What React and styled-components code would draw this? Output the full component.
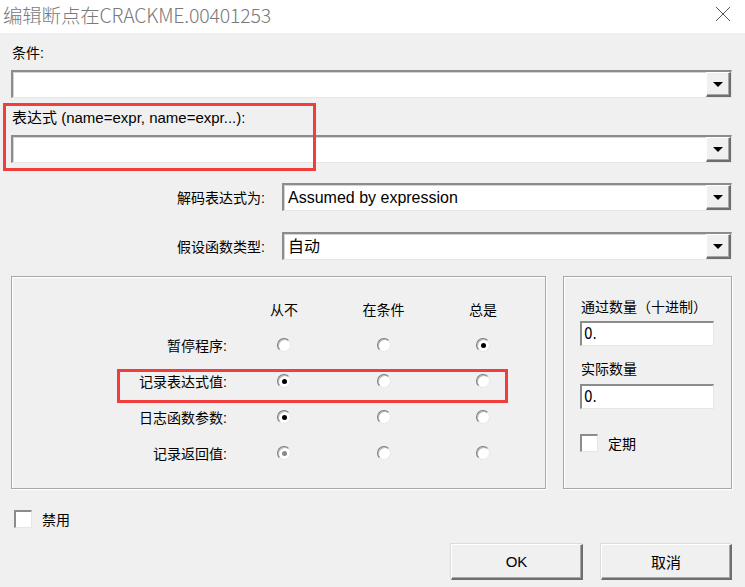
import React from "react";
import styled, { createGlobalStyle } from "styled-components";

const Global = createGlobalStyle`
  html, body { margin: 0; padding: 0; background: #f0f0f0; }
  * { box-sizing: border-box; }
`;

const FONT = `"Liberation Sans", "Noto Sans CJK SC", sans-serif`;

const Window = styled.div`
  width: 745px;
  height: 587px;
  background: #f0f0f0;
  display: flex;
  flex-direction: column;
  font-family: ${FONT};
  font-size: 14px;
  color: #000;
  overflow: hidden;
`;

const TitleBar = styled.div`
  height: 33px;
  background: #fff;
  display: flex;
  align-items: center;
  justify-content: space-between;
  padding: 0 14px 0 3px;
  flex-shrink: 0;
`;

const Title = styled.div`
  font-family: "Noto Sans CJK SC", "Liberation Sans", sans-serif;
  font-size: 19.5px;
  font-weight: 300;
  color: #7a7a7a;
  margin-top: -4px;
  letter-spacing: -0.2px;
  white-space: nowrap;
`;

const Close = styled.svg`
  width: 16px;
  height: 16px;
  margin-top: -6px;
`;

const Body = styled.div`
  position: relative;
  flex: 1;
  display: flex;
  flex-direction: column;
  padding: 0 13px 0 11px;
`;

const Label = styled.div`
  line-height: 18px;
  height: 18px;
  margin-top: ${(p) => p.$mt || 0}px;
  padding-left: 1px;
  white-space: nowrap;
  font-size: ${(p) => p.$fs || 14}px;
`;

const Combo = styled.div`
  height: 28px;
  margin-top: ${(p) => p.$mt || 0}px;
  flex: ${(p) => (p.$grow ? "1 1 auto" : "none")};
  display: flex;
  background: #fff;
  border-top: 2px solid #8c8c8c;
  border-left: 2px solid #8c8c8c;
  border-right: 1px solid #e6e6e6;
  border-bottom: 1px solid #e6e6e6;
  box-shadow: inset 1px 1px 0 #d4d4d4;
`;

const ComboText = styled.div`
  flex: 1;
  padding-left: 4px;
  line-height: 25px;
  font-size: 16px;
  white-space: nowrap;
`;

const DropBtn = styled.div`
  width: 25px;
  background: #f0f0f0;
  border-top: 1px solid #ffffff;
  border-left: 1px solid #ffffff;
  border-right: 2px solid #6e6e6e;
  border-bottom: 2px solid #6e6e6e;
  box-shadow: inset -1px -1px 0 #a8a8a8;
  display: flex;
  align-items: center;
  justify-content: center;
`;

const Arrow = styled.div`
  width: 0;
  height: 0;
  border-left: 5px solid transparent;
  border-right: 5px solid transparent;
  border-top: 5px solid #000;
  margin-top: 1px;
`;

const FieldRow = styled.div`
  display: flex;
  align-items: center;
  margin-top: ${(p) => p.$mt || 0}px;
`;

const RowLabel = styled.div`
  width: 255px;
  text-align: right;
  padding-right: 1px;
  margin-right: 16px;
  white-space: nowrap;
`;

const Groups = styled.div`
  display: flex;
  gap: 17px;
  margin-top: 16px;
  height: 213px;
  flex: none;
`;

const GroupBox = styled.div`
  border: 1px solid #a8a8a8;
  box-shadow: inset 1px 1px 0 #fff, 1px 1px 0 #fff;
  width: ${(p) => p.$w}px;
`;

const ModeGrid = styled.div`
  display: grid;
  grid-template-columns: 222px 100px 99px 100px;
  grid-auto-rows: 36px;
  padding-top: 14px;
  align-items: center;
`;

const Head = styled.div`
  text-align: center;
  white-space: nowrap;
`;

const RowName = styled.div`
  text-align: right;
  padding-right: 7px;
  white-space: nowrap;
`;

const RadioCell = styled.div`
  display: flex;
  justify-content: center;
`;

const Radio = styled.div`
  width: 14px;
  height: 14px;
  border-radius: 50%;
  background: #fff;
  border: 1px solid;
  border-color: #7a7a7a #e8e8e8 #e8e8e8 #7a7a7a;
  box-shadow: inset 1px 1px 0 #b9b9b9;
  display: flex;
  align-items: center;
  justify-content: center;

  &::after {
    content: "";
    width: 5px;
    height: 5px;
    border-radius: 50%;
    background: ${(p) => (p.$disabled ? "#8a8a8a" : "#000")};
    display: ${(p) => (p.$on ? "block" : "none")};
  }
`;

const CountCol = styled.div`
  display: flex;
  flex-direction: column;
  padding: 21px 0 0 16px;
`;

const TextInput = styled.div`
  width: 134px;
  height: 25px;
  margin-top: ${(p) => p.$mt || 0}px;
  background: #fff;
  border-top: 2px solid #8c8c8c;
  border-left: 2px solid #8c8c8c;
  border-right: 1px solid #e6e6e6;
  border-bottom: 1px solid #e6e6e6;
  padding-left: 2px;
  line-height: 22px;
  font-size: 15px;
  font-family: "DejaVu Sans Condensed", "Liberation Sans", sans-serif;
`;

const CheckRow = styled.div`
  display: flex;
  align-items: center;
  gap: 10px;
  margin-top: ${(p) => p.$mt || 0}px;
  padding-left: ${(p) => p.$pl || 0}px;
  flex: none;
`;

const CheckBox = styled.div`
  width: 18px;
  height: 18px;
  background: #fff;
  border-top: 2px solid #8c8c8c;
  border-left: 2px solid #8c8c8c;
  border-right: 1px solid #e6e6e6;
  border-bottom: 1px solid #e6e6e6;
`;

const ButtonRow = styled.div`
  display: flex;
  justify-content: flex-end;
  gap: 18px;
  margin-top: 15px;
  flex: none;
`;

const Button = styled.div`
  width: ${(p) => p.$w}px;
  height: 36px;
  background: #f0f0f0;
  border-top: 1px solid #ffffff;
  border-left: 1px solid #ffffff;
  border-right: 2px solid #6e6e6e;
  border-bottom: 2px solid #6e6e6e;
  box-shadow: inset -1px -1px 0 #a8a8a8, -1px -1px 0 #dcdcdc;
  display: flex;
  align-items: center;
  justify-content: center;
  font-size: 15px;
`;

const Highlight = styled.div`
  position: absolute;
  left: ${(p) => p.$x}px;
  top: ${(p) => p.$y}px;
  width: ${(p) => p.$w}px;
  height: ${(p) => p.$h}px;
  border: 3px solid #f23d3d;
  pointer-events: none;
`;

const Dropdown = ({ value, mt, grow }) => (
  <Combo $mt={mt} $grow={grow}>
    <ComboText>{value}</ComboText>
    <DropBtn>
      <Arrow />
    </DropBtn>
  </Combo>
);

const rows = [
  { name: "暂停程序:", sel: 2 },
  { name: "记录表达式值:", sel: 0 },
  { name: "日志函数参数:", sel: 0 },
  { name: "记录返回值:", sel: 0, disabled: true },
];

export default function App() {
  return (
    <>
      <Global />
      <Window>
        <TitleBar>
          <Title>编辑断点在CRACKME.00401253</Title>
          <Close viewBox="0 0 16 16">
            <path d="M1 1 L15 15 M15 1 L1 15" stroke="#555" strokeWidth="1" fill="none" />
          </Close>
        </TitleBar>
        <Body>
          <Label $mt={11}>条件:</Label>
          <Dropdown mt={8} value="" />
          <Label $mt={11} $fs={15}>表达式 (name=expr, name=expr...):</Label>
          <Dropdown mt={8} value="" />
          <FieldRow $mt={20}>
            <RowLabel>解码表达式为:</RowLabel>
            <Dropdown grow value="Assumed by expression" />
          </FieldRow>
          <FieldRow $mt={21}>
            <RowLabel>假设函数类型:</RowLabel>
            <Dropdown grow value="自动" />
          </FieldRow>
          <Groups>
            <GroupBox $w={535}>
              <ModeGrid>
                <div />
                <Head>从不</Head>
                <Head>在条件</Head>
                <Head>总是</Head>
                {rows.map((r) => (
                  <React.Fragment key={r.name}>
                    <RowName>{r.name}</RowName>
                    {[0, 1, 2].map((i) => (
                      <RadioCell key={i}>
                        <Radio $on={r.sel === i} $disabled={r.disabled} />
                      </RadioCell>
                    ))}
                  </React.Fragment>
                ))}
              </ModeGrid>
            </GroupBox>
            <GroupBox $w={169}>
              <CountCol>
                <Label>通过数量（十进制）</Label>
                <TextInput $mt={5}>0.</TextInput>
                <Label $mt={14}>实际数量</Label>
                <TextInput $mt={6}>0.</TextInput>
                <CheckRow $mt={24}>
                  <CheckBox />
                  <span>定期</span>
                </CheckRow>
              </CountCol>
            </GroupBox>
          </Groups>
          <CheckRow $mt={20} $pl={3}>
            <CheckBox />
            <span>禁用</span>
          </CheckRow>
          <ButtonRow>
            <Button $w={132}>OK</Button>
            <Button $w={131}>取消</Button>
          </ButtonRow>
          <Highlight $x={3} $y={70} $w={313} $h={68} />
          <Highlight $x={117} $y={336} $w={391} $h={34} />
        </Body>
      </Window>
    </>
  );
}
